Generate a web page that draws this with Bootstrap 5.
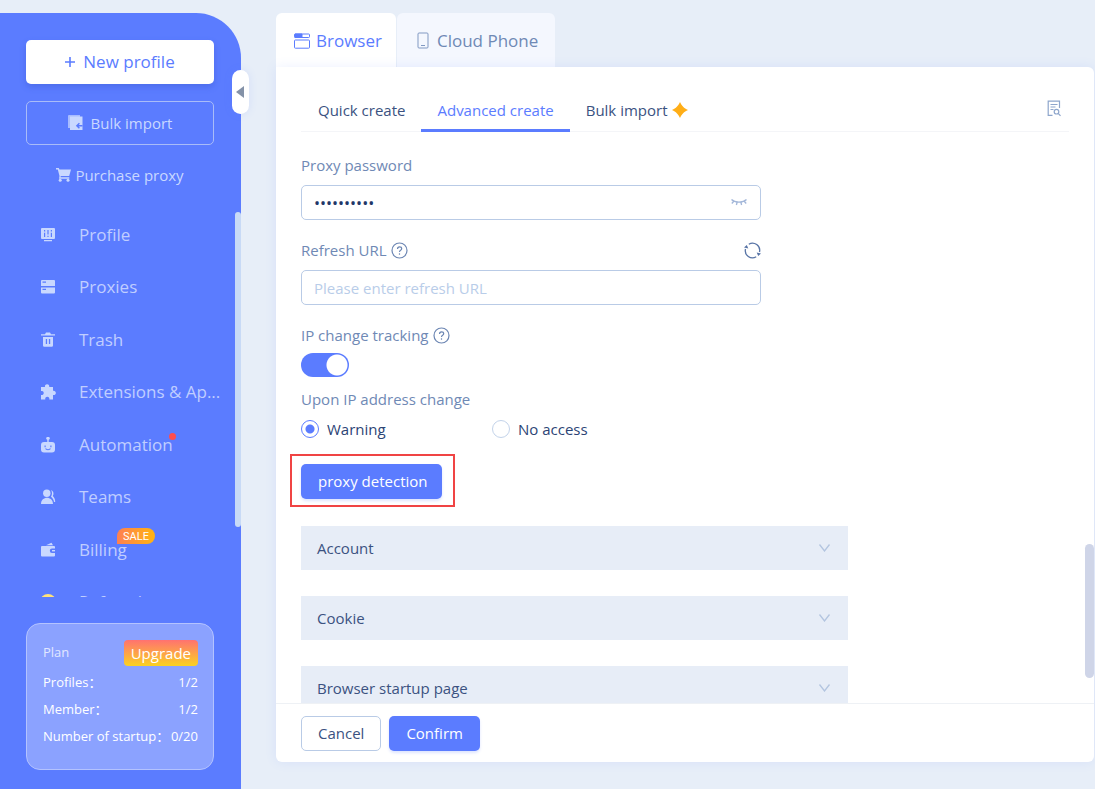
<!DOCTYPE html>
<html lang="en">
<head>
<meta charset="utf-8">
<meta name="viewport" content="width=device-width, initial-scale=1">
<title>New profile</title>
<link href="https://cdn.jsdelivr.net/npm/bootstrap@5.3.0/dist/css/bootstrap.min.css" rel="stylesheet">
<style>
:root{--blue:#5b7cff;--ink:#3b5281;--muted:#6f89b5;--line:#b9cbe6;--soft:#e7edf7;--pale:#c9d8ff}
body{font-family:"Open Sans","Noto Sans CJK SC",sans-serif;font-size:15px;line-height:24px;color:var(--ink);background:#e7eef8}
svg{display:block;flex:none}
button{font-family:inherit}
.side{width:241px;background:var(--blue);border-top-right-radius:45px;margin-top:13px;padding-top:27px}
.acts{margin:0 27px 0 26px}
.side .btn{height:44px;font-size:15px;border-radius:5px}
.side .btn-new{background:#fff;color:var(--blue);font-size:17px;box-shadow:0 3px 6px #2f4fc055}
.side .btn-bulk{border:1px solid #a9bcf8;color:var(--pale);margin-top:17px}
.buy{color:var(--pale);text-decoration:none;margin-top:18px}
.menu-wrap{margin-top:22px;min-height:0}
.menu-item{height:52px;flex:none;padding:0 18px 0 40px;gap:23px;color:#c0ceff;font-size:17px;text-decoration:none}
.menu-item:nth-child(even){margin-bottom:1px}
.menu-item svg{fill:var(--pale)}
.thumb{position:absolute;right:0;top:3px;width:6px;height:315px;border-radius:3px;background:#c8daf6}
.dot{position:absolute;top:0;right:-3px;width:7px;height:7px;border-radius:50%;background:#ff4d4f}
.sale{position:absolute;left:38px;top:-10px;height:16px;padding:0 6px;font:11px/17px Roboto,sans-serif;color:#fff;border-radius:8px 8px 8px 0;background:linear-gradient(90deg,#ff8052,#ffb40f)}
.fold{position:absolute;right:-8px;top:57px;width:17px;height:44px;border:0;border-radius:9px;background:#fff;box-shadow:0 0 8px #5b7cff22;z-index:2}
.plan{margin:26px 27px 19px 26px;padding:15px 15px 20px 16px;height:147px;border:1px solid #b4c3ff;border-radius:14px;background:#8ba2ff;color:#fff;font-size:13px;line-height:27px}
.plan-head{margin-bottom:3px}
.upgrade{border:0;height:26px;padding:0 7px;border-radius:4px;color:#fff;font-size:15px;line-height:26px;background:linear-gradient(#ff7270,#fbd221)}
.main{margin:13px 1px 27px 35px;min-width:0}
.kinds{gap:1px}
.kind{height:54px;border:0;padding:1px 14px 0 18px;gap:6px;border-radius:6px 6px 0 0;font-size:17px;background:#f4f7fe;color:var(--muted)}
.kind + .kind{padding-right:17px}
.kind.active{background:#fff;color:var(--blue)}
.panel{min-height:0;background:#fff;border-radius:0 6px 6px 6px;box-shadow:0 0 12px #5b7cff1c}
.modes{margin:22px 25px 0;padding-left:1px;border-bottom:1px solid #f4f5f8}
.mode{border:0;border-bottom:3px solid transparent;background:none;padding:4px 16px 2px;height:43px;color:var(--ink);margin-bottom:-1px}
.mode.active{color:var(--blue);border-color:var(--blue)}
.scroll{padding:21px 25px 0;min-height:0}
.narrow{max-width:460px}
.sections{max-width:547px;margin-top:19px;gap:26px}
.tag{color:var(--muted)}
.row-label{margin-top:18px}
.form-control{height:35px;font-size:15px;border-color:var(--line);border-radius:5px;padding:1px 12px 0;color:#1f3768}
.form-control[type=password]{font-size:16px;padding-right:40px}
.form-control::placeholder{color:#b9cde9}
.eye{position:absolute;right:14px;top:9px;border:0;background:none;padding:0}
.toggle{margin:6px 0 10px}
.form-switch .form-check-input{width:48px;height:24px;margin:0;border:0;background-color:#c5d0e4;background-image:radial-gradient(circle,#fff 10px,transparent 11px);background-size:24px 24px;background-repeat:no-repeat}
.form-switch .form-check-input:checked{background-color:var(--blue);background-image:radial-gradient(circle,#fff 10px,transparent 11px)}
.picks{margin-top:6px;color:#2c4475}
.pick{width:191px;gap:8px}
.pick .form-check-input{width:18px;height:18px;margin:0;border-color:#c3d3ea}
.pick .form-check-input:checked{border-color:var(--blue);background:radial-gradient(circle,var(--blue) 4px,#fff 5px)}
.marked{border:2px solid #f04444;padding:8px 11px 6px 9px;margin:13px 0 0 -11px;width:165px}
.act{height:35px;border-radius:5px;font-size:15px;padding:0 16px;color:#fff;background:var(--blue);box-shadow:0 2px 3px #5b7cff33}
.act.plain{background:#fff;color:var(--ink);border-color:var(--line);box-shadow:none}
.section{height:44px;flex:none;border:0;padding:0 17px 0 16px;background:var(--soft);color:var(--ink)}
.foot{height:59px;flex:none;border-top:1px solid #eef1f5;padding:0 25px}
.bar{position:absolute;right:0;top:477px;width:9px;height:134px;border-radius:5px;background:#cfd5e8}
</style>
</head>
<body>
<div class="d-flex vh-100 overflow-hidden">
  <aside class="side d-flex flex-column position-relative flex-shrink-0">
    <button class="fold d-flex align-items-center justify-content-center p-0" type="button" aria-label="Collapse"><svg width="9" height="12" viewBox="0 0 9 12"><path fill="#8492a8" d="M8 0v12L0 6z"/></svg></button>
    <div class="acts d-flex flex-column">
      <button class="btn btn-new d-flex align-items-center justify-content-center gap-2" type="button"><svg width="10" height="10" viewBox="0 0 10 10"><path d="M5 0v10M0 5h10" stroke="#5b7cff" stroke-width="1.600"/></svg>New profile</button>
      <button class="btn btn-bulk d-flex align-items-center justify-content-center gap-2" type="button"><svg width="15" height="16" viewBox="0 0 15 16"><path fill="#a8bcff" d="M0 1a1 1 0 011-1h11v2H2v11H0z"/><path fill="#c9d8ff" d="M2 1.500h12.500V15H2z"/><path d="M14.500 10.800H9m2.400-2.500L8.900 10.800l2.500 2.500" fill="none" stroke="#5b7cff" stroke-width="1.500"/></svg>Bulk import</button>
      <a class="buy d-flex align-items-center justify-content-center gap-1" href="#"><svg width="15" height="14" viewBox="0 0 15 14" fill="#c9d8ff"><path d="M0 0h2.800l.6 1.600H15L13.200 8H4.800l-.3 1.300h8.800v1.400H3L3.500 8 1.800 1.400H0z"/><circle cx="4.200" cy="12.300" r="1.500"/><circle cx="12" cy="12.300" r="1.500"/></svg>Purchase proxy</a>
    </div>
    <div class="menu-wrap flex-grow-1 position-relative">
      <nav class="d-flex flex-column h-100 overflow-hidden">
        <a class="menu-item d-flex align-items-center" href="#"><svg width="16" height="16" viewBox="0 0 16 16"><path fill-rule="evenodd" d="M2 1h12a1 1 0 011 1v9a1 1 0 01-1 1H2a1 1 0 01-1-1V2a1 1 0 011-1zm2 2v7h1.200V3zm3.400 0v7h1.200V3zm3.400 0v7H12V3z"/><path d="M3.500 4.500h2.200v1.200H3.500zM6.900 7.500h2.200v1.200H6.900zM10.300 4.500h2.200v1.200h-2.200zM4 13h8v1.200H4z"/></svg>Profile</a>
        <a class="menu-item d-flex align-items-center" href="#"><svg width="16" height="16" viewBox="0 0 16 16"><path fill-rule="evenodd" d="M2 1h12a1 1 0 011 1v5H1V2a1 1 0 011-1zm.5 1.500v1.200H6V2.500zM1 8.500h14v5a1 1 0 01-1 1H2a1 1 0 01-1-1zm1.500 1.300V11H6V9.800z"/></svg>Proxies</a>
        <a class="menu-item d-flex align-items-center" href="#"><svg width="16" height="16" viewBox="0 0 16 16"><path fill-rule="evenodd" d="M1 2.200h4L6 .5h4l1 1.700h4v1.400H1zM3 5h10v8.500a1.300 1.300 0 01-1.300 1.300H4.300A1.300 1.300 0 013 13.500zm2.800 2v5h1.300V7zm3.100 0v5h1.300V7z"/></svg>Trash</a>
        <a class="menu-item d-flex align-items-center" href="#"><svg width="16" height="16" viewBox="0 0 16 16"><path d="M1 3h4a2.200 2.200 0 114.200 0H13v3.800a2.200 2.200 0 110 4.200v4.500H9.300a2.100 2.100 0 10-4 0H1V11a2.100 2.100 0 100-4z"/></svg><span class="text-nowrap">Extensions &amp; Ap...</span></a>
        <a class="menu-item d-flex align-items-center" href="#"><svg width="16" height="16" viewBox="0 0 16 16"><path fill-rule="evenodd" d="M7.300 5V2.800a1.700 1.700 0 111.400 0V5H12a3 3 0 013 3v4.500a3 3 0 01-3 3H4a3 3 0 01-3-3V8a3 3 0 013-3zM4.500 8.500v1.800h1.200V8.500zm5.800 0v1.800h1.200V8.500zM5 11.500c1 2.300 5 2.300 6 0H9.800c-1 1-2.600 1-3.600 0z"/></svg><span class="position-relative">Automation<span class="dot"></span></span></a>
        <a class="menu-item d-flex align-items-center" href="#"><svg width="16" height="16" viewBox="0 0 16 16"><circle cx="6.800" cy="4.300" r="3.700"/><path d="M1 15c0-8.500 12-8.500 12 0zM11 1a4 4 0 011.800 6C14.300 8.500 15.200 10 15.200 13H14c-.3-2.500-1.500-4-3-5.300 1.400-2 1.300-4.700 0-6.700z"/></svg>Teams</a>
        <a class="menu-item d-flex align-items-center" href="#"><svg width="16" height="16" viewBox="0 0 16 16"><path d="M6 3.300L11.500.8l1.500 2.500zM2 4h12a1 1 0 011 1v1.500h-3a2.200 2.200 0 000 4.400h3V13.500a1 1 0 01-1 1H2a1 1 0 01-1-1V5a1 1 0 011-1z"/><path d="M12 8h3v1.400h-3z"/></svg><span class="position-relative">Billing<span class="sale">SALE</span></span></a>
        <a class="menu-item d-flex align-items-center" href="#"><svg width="16" height="16" viewBox="0 0 16 16"><circle cx="8" cy="8" r="8" style="fill:#ffe27a"/><circle cx="8" cy="8" r="5" fill="#f5b93a"/></svg>Referral</a>
      </nav>
      <span class="thumb"></span>
    </div>
    <section class="plan flex-shrink-0">
      <div class="plan-head d-flex justify-content-between align-items-center"><span class="opacity-75">Plan</span><button class="upgrade" type="button">Upgrade</button></div>
      <div class="d-flex justify-content-between"><span>Profiles：</span><span>1/2</span></div>
      <div class="d-flex justify-content-between"><span>Member：</span><span>1/2</span></div>
      <div class="d-flex justify-content-between text-nowrap"><span>Number of startup：</span><span>0/20</span></div>
    </section>
  </aside>

  <main class="main d-flex flex-column flex-grow-1">
    <div class="kinds d-flex flex-shrink-0">
      <button class="kind active d-flex align-items-center" type="button"><svg width="16" height="16" viewBox="0 0 16 16" fill="none" stroke="#5b7cff"><rect x=".5" y="1" width="15" height="3.500" rx=".8"/><path d="M1 1h7v3.500H1z" fill="#5b7cff"/><rect x=".5" y="7" width="15" height="8.200" rx=".8"/></svg>Browser</button>
      <button class="kind d-flex align-items-center" type="button"><svg width="16" height="17" viewBox="0 0 16 17" fill="none" stroke="#8199c2"><rect x="3" y="1" width="10" height="15" rx="1"/><path d="M6 13.500h4"/></svg>Cloud Phone</button>
    </div>
    <div class="panel d-flex flex-column flex-grow-1 position-relative">
      <div class="modes d-flex flex-shrink-0 align-items-end">
        <button class="mode" type="button">Quick create</button>
        <button class="mode active" type="button">Advanced create</button>
        <button class="mode d-flex align-items-center gap-1" type="button">Bulk import<svg width="16" height="16" viewBox="0 0 16 16"><path fill="#ffae17" d="M8 0c2 4.200 3.800 6 8 8-4.200 2-6 3.800-8 8-2-4.200-3.800-6-8-8 4.200-2 6-3.800 8-8z"/></svg></button>
        <button class="mode ms-auto px-2 pt-0 d-flex align-items-center" type="button" aria-label="Records"><svg width="14" height="17" viewBox="0 0 14 17" fill="none" stroke="#8ea6cc" stroke-width="1.200"><path d="M5.500 15.400H1.200V1.200h11.300V8M3.500 4.500h7M3.500 7h5M3.500 9.500h3"/><circle cx="9.500" cy="11.700" r="2.300"/><path d="M11.200 13.400l2.300 2.500"/></svg></button>
      </div>
      <div class="scroll flex-grow-1 overflow-hidden">
        <div class="narrow">
          <label class="tag d-block mb-2" for="pw">Proxy password</label>
          <div class="position-relative">
            <input class="form-control" id="pw" type="password" value="abcdefghij">
            <button class="eye" type="button" aria-label="Show password"><svg width="16" height="16" viewBox="0 0 16 16" fill="none" stroke="#a3b7d9" stroke-width="1.300"><path d="M.5 5.500c3.500 3.500 11.500 3.500 15 0M3 7L.8 9.500M6.200 8l-.8 3M9.800 8l.8 3M13 7l2.200 2.500"/></svg></button>
          </div>
          <div class="row-label d-flex align-items-center justify-content-between mb-2">
            <label class="tag d-flex align-items-center gap-1" for="url">Refresh URL <svg width="17" height="17" viewBox="0 0 17 17" fill="none" stroke="#6c86b3" stroke-width="1.200"><circle cx="8.500" cy="8.500" r="7.500"/><path d="M6.500 7c0-3 4.200-2.700 4.200-.3 0 1.700-2.200 1.500-2.200 3.300"/><path d="M8.500 11.300v1.400"/></svg></label>
            <button class="border-0 bg-transparent p-0" type="button" aria-label="Refresh"><svg width="17" height="17" viewBox="0 0 17 17" fill="none" stroke="#5874a6" stroke-width="1.300"><path d="M4.800 2.200A7.200 7.200 0 0115.500 10M12.200 14.800A7.200 7.200 0 011.500 7"/><path fill="#5874a6" stroke="none" d="M0 5.500L2.800 3l1.500 3.500zM17 11.500L14.200 14l-1.500-3.500z"/></svg></button>
          </div>
          <input class="form-control" id="url" type="text" placeholder="Please enter refresh URL">
          <label class="row-label tag d-flex align-items-center gap-1" for="track">IP change tracking <svg width="17" height="17" viewBox="0 0 17 17" fill="none" stroke="#6c86b3" stroke-width="1.200"><circle cx="8.500" cy="8.500" r="7.500"/><path d="M6.500 7c0-3 4.200-2.700 4.200-.3 0 1.700-2.200 1.500-2.200 3.300"/><path d="M8.500 11.300v1.400"/></svg></label>
          <div class="toggle form-switch p-0 d-flex"><input class="form-check-input" type="checkbox" role="switch" id="track" checked></div>
          <div class="tag">Upon IP address change</div>
          <div class="picks d-flex">
            <div class="pick d-flex align-items-center"><input class="form-check-input" type="radio" name="ip" id="warn" checked><label for="warn">Warning</label></div>
            <div class="pick d-flex align-items-center"><input class="form-check-input" type="radio" name="ip" id="deny"><label for="deny">No access</label></div>
          </div>
          <div class="marked"><button class="btn act w-100 text-nowrap" type="button">proxy detection</button></div>
        </div>
        <div class="sections d-flex flex-column">
          <button class="section d-flex align-items-center justify-content-between" type="button">Account<svg width="13" height="8" viewBox="0 0 13 8" fill="none" stroke="#b3c5e0" stroke-width="1.300"><path d="M1.500.5l5 6.500 5-6.500"/></svg></button>
          <button class="section d-flex align-items-center justify-content-between" type="button">Cookie<svg width="13" height="8" viewBox="0 0 13 8" fill="none" stroke="#b3c5e0" stroke-width="1.300"><path d="M1.500.5l5 6.500 5-6.500"/></svg></button>
          <button class="section d-flex align-items-center justify-content-between" type="button">Browser startup page<svg width="13" height="8" viewBox="0 0 13 8" fill="none" stroke="#b3c5e0" stroke-width="1.300"><path d="M1.500.5l5 6.500 5-6.500"/></svg></button>
        </div>
      </div>
      <div class="foot d-flex align-items-center gap-2">
        <button class="btn act plain" type="button">Cancel</button>
        <button class="btn act" type="button">Confirm</button>
      </div>
      <span class="bar"></span>
    </div>
  </main>
</div>
<script src="https://cdn.jsdelivr.net/npm/bootstrap@5.3.0/dist/js/bootstrap.bundle.min.js"></script>
</body>
</html>
